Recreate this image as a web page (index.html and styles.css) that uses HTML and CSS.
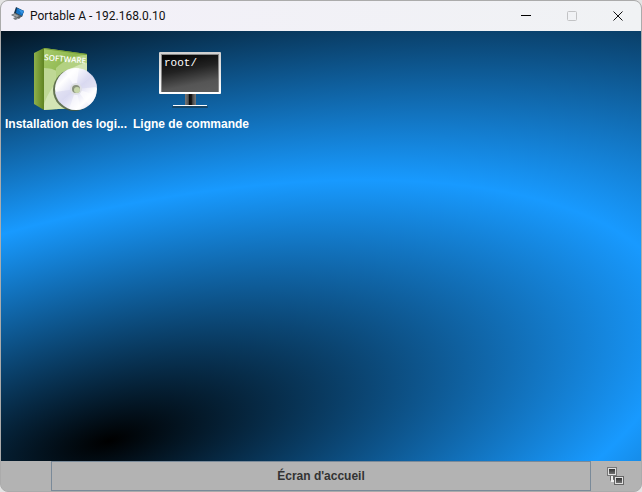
FILE: index.html
```html
<!DOCTYPE html>
<html lang="fr">
<head>
<meta charset="utf-8">
<title>Portable A - 192.168.0.10</title>
<link rel="stylesheet" href="styles.css">
</head>
<body>
<div class="window">
  <header class="titlebar">
    <svg class="app-icon" width="16" height="16" viewBox="0 0 16 16" aria-hidden="true">
      <path d="M6 1 L14 5 L12 11 L4 7Z" fill="#16334e"/>
      <path d="M7 2 L14 5 L12 10 L6 7Z" fill="#1673c4"/>
      <path d="M8 3 L14 5 L12 8Z" fill="#3592e2"/>
      <path d="M1 9 L5 7 L12 10 L9 13Z" fill="#5b6064"/>
      <path d="M2 9 L5 8 L9 10 L7 11Z" fill="#a2a7aa"/>
      <path d="M3 12 L6 11 L8 13 L5 14Z" fill="#777b7e"/>
    </svg>
    <h1 class="title">Portable A - 192.168.0.10</h1>
    <div class="controls">
      <button class="control" aria-label="Réduire">
        <svg width="12" height="12" viewBox="0 0 12 12"><path d="M1 5.500H11" stroke="#000"/></svg>
      </button>
      <button class="control" aria-label="Agrandir" disabled>
        <svg width="12" height="12" viewBox="0 0 12 12"><rect x="1.500" y="1.500" width="9" height="9" rx="1" fill="none" stroke="#c2c3c5"/></svg>
      </button>
      <button class="control" aria-label="Fermer">
        <svg width="12" height="12" viewBox="0 0 12 12"><path d="M1.500 1.500L10.500 10.500M10.500 1.500L1.500 10.500" stroke="#111"/></svg>
      </button>
    </div>
  </header>

  <main class="desktop">
    <svg class="wallpaper" viewBox="0 0 640 430" preserveAspectRatio="none" aria-hidden="true">
      <defs>
        <radialGradient id="glow" gradientUnits="userSpaceOnUse" cx="0" cy="0" r="2" gradientTransform="matrix(508 0 -256 261 108 410)">
          <stop offset="0" stop-color="#000"/>
          <stop offset="0.500" stop-color="#189aff"/>
          <stop offset="1" stop-color="#000"/>
        </radialGradient>
      </defs>
      <rect width="640" height="430" fill="url(#glow)"/>
    </svg>

    <div class="shortcuts">
      <button class="shortcut">
        <svg width="64" height="64" viewBox="0 0 64 64" aria-hidden="true">
          <defs>
            <linearGradient id="side" x1="0" x2="1" y1="0" y2="0">
              <stop offset="0" stop-color="#8fb04c"/>
              <stop offset="0.400" stop-color="#7c9f3a"/>
              <stop offset="1" stop-color="#5f8320"/>
            </linearGradient>
            <linearGradient id="front" x1="0" x2="1" y1="0" y2="1">
              <stop offset="0" stop-color="#a9cb6c"/>
              <stop offset="0.400" stop-color="#8fb850"/>
              <stop offset="1" stop-color="#a9cb70"/>
            </linearGradient>
            <linearGradient id="disc" x1="0" x2="1" y1="0" y2="1">
              <stop offset="0" stop-color="#d4d4ee"/>
              <stop offset="0.250" stop-color="#ffffff"/>
              <stop offset="0.500" stop-color="#dcdcf2"/>
              <stop offset="0.750" stop-color="#ffffff"/>
              <stop offset="1" stop-color="#d0d0ea"/>
            </linearGradient>
            <clipPath id="face"><path d="M10 1 L53 7 V60 L10 63Z"/></clipPath>
          </defs>
          <path d="M0 6 L10 1 V63 L0 57Z" fill="url(#side)"/>
          <path d="M10 1 L53 7 V60 L10 63Z" fill="url(#front)"/>
          <g clip-path="url(#face)">
            <path d="M10 21 C18 21 24 24 27 27 C20 38 12 52 10 63Z" fill="#bfd895"/>
            <path d="M22 21 C30 13 42 8 54 8 V64 H22Z" fill="#b3d182"/>
            <path d="M54 16 C34 18 18 36 10 57 V64 H54Z" fill="#d3e5b5"/>
          </g>
          <path d="M10 1 L53 7 V8 L10 2Z" fill="#789f35"/>
          <text class="box-text" x="10" y="13" transform="rotate(5 10 13)">SOFTWARE</text>
          <circle cx="40" cy="43" r="21" fill="#49573c" opacity="0.800"/>
          <circle cx="42" cy="42" r="21" fill="url(#disc)"/>
          <path d="M42 42 L31 24 A21 21 0 0 1 45 21Z" fill="#fff" opacity="0.600"/>
          <path d="M42 42 L58 28 A21 21 0 0 1 63 40Z" fill="#d5d5ef" opacity="0.600"/>
          <path d="M42 42 L62 48 A21 21 0 0 1 55 58Z" fill="#fff" opacity="0.600"/>
          <path d="M42 42 L26 56 A21 21 0 0 1 21 45Z" fill="#d5d5ef" opacity="0.600"/>
          <path d="M42 42 L47 62 A21 21 0 0 1 35 62Z" fill="#fff" opacity="0.500"/>
          <circle cx="42" cy="42" r="6" fill="#dfe0e6"/>
          <circle cx="42" cy="42" r="4" fill="#8a937c"/>
          <circle cx="43" cy="43" r="3" fill="#c8d7aa"/>
        </svg>
        <span class="label">Installation des logi...</span>
      </button>

      <button class="shortcut">
        <svg width="64" height="64" viewBox="0 0 64 64" aria-hidden="true">
          <defs>
            <linearGradient id="screen" x1="0.300" x2="0.600" y1="0" y2="1">
              <stop offset="0" stop-color="#050505"/>
              <stop offset="0.400" stop-color="#222"/>
              <stop offset="0.800" stop-color="#555"/>
              <stop offset="1" stop-color="#5b5b5b"/>
            </linearGradient>
            <linearGradient id="bezel" x1="0" x2="0" y1="0" y2="1">
              <stop offset="0" stop-color="#d0d0d0"/>
              <stop offset="1" stop-color="#fff"/>
            </linearGradient>
            <linearGradient id="stand" x1="0" x2="1" y1="0" y2="0">
              <stop offset="0" stop-color="#777"/>
              <stop offset="0.300" stop-color="#555"/>
              <stop offset="0.400" stop-color="#0a0a0a"/>
              <stop offset="0.600" stop-color="#1a1a1a"/>
              <stop offset="0.700" stop-color="#4a4a4a"/>
              <stop offset="1" stop-color="#777"/>
            </linearGradient>
          </defs>
          <rect x="26" y="46" width="11" height="13" fill="url(#stand)"/>
          <rect x="13" y="59" width="36" height="2" rx="1" fill="#174565"/>
          <rect x="14" y="58" width="34" height="1" fill="#fff"/>
          <rect x="0" y="5" width="62" height="42" rx="1" fill="url(#bezel)"/>
          <rect x="2" y="7" width="58" height="38" fill="#888"/>
          <rect x="3" y="8" width="56" height="37" fill="url(#screen)"/>
          <text class="prompt" x="5" y="19">root/</text>
        </svg>
        <span class="label">Ligne de commande</span>
      </button>
    </div>
  </main>

  <footer class="taskbar">
    <button class="home">Écran d'accueil</button>
    <button class="network" aria-label="Réseau">
      <svg width="20" height="20" viewBox="0 0 20 20" aria-hidden="true">
        <defs>
          <linearGradient id="node" x1="0" x2="0" y1="0" y2="1">
            <stop offset="0" stop-color="#333"/>
            <stop offset="1" stop-color="#707070"/>
          </linearGradient>
        </defs>
        <path d="M6 9V15H10" fill="none" stroke="#eee" stroke-width="2"/>
        <path d="M4.500 9V14.500M7.500 9V13.500H9" fill="none" stroke="#666"/>
        <rect x="1.500" y="1.500" width="9" height="8" fill="#e0e0e0" stroke="#777"/>
        <rect x="3" y="3" width="6" height="5" fill="url(#node)"/>
        <rect x="8.500" y="10.500" width="9" height="8" fill="#e0e0e0" stroke="#666"/>
        <rect x="10" y="12" width="6" height="5" fill="url(#node)"/>
      </svg>
    </button>
  </footer>
</div>
</body>
</html>
```
FILE: styles.css
```css
* {
  box-sizing: border-box;
}

body {
  margin: 0;
  background: #e4e4e4;
  font-family: "Liberation Sans", Arial, sans-serif;
}

button {
  margin: 0;
  padding: 0;
  border: 0;
  background: none;
  font: inherit;
  color: inherit;
}

svg {
  display: block;
}

.window {
  display: flex;
  flex-direction: column;
  height: 100vh;
  overflow: hidden;
  border: 1px solid #ababab;
  border-radius: 8px;
  background: #b3b3b3;
}

.titlebar {
  display: flex;
  align-items: center;
  flex: none;
  height: 30px;
  padding-left: 9px;
  gap: 4px;
  background: linear-gradient(90deg, #f3f0f9, #f0f2f4);
}

.app-icon {
  flex: none;
  margin-bottom: 4px;
}

.title {
  flex: 1;
  margin: 0;
  font-family: Roboto, "Open Sans", sans-serif;
  font-size: 12px;
  font-weight: 400;
  line-height: 16px;
  color: #111;
}

.controls {
  display: flex;
  height: 100%;
}

.control {
  display: grid;
  place-items: center;
  width: 46px;
}

.desktop {
  position: relative;
  flex: 1;
  min-height: 0;
}

.wallpaper {
  position: absolute;
  inset: 0;
  width: 100%;
  height: 100%;
}

.shortcuts {
  position: relative;
  display: flex;
  gap: 5px;
  padding: 16px 5px;
}

.shortcut {
  display: flex;
  flex-direction: column;
  align-items: center;
  gap: 6px;
  width: 120px;
}

.label {
  font-size: 12px;
  font-weight: 700;
  line-height: 14px;
  white-space: nowrap;
  color: #fff;
}

.box-text {
  font-family: "Open Sans", sans-serif;
  font-size: 8px;
  font-weight: 600;
  fill: #fff;
}

.prompt {
  font-family: "Liberation Mono", monospace;
  font-size: 11px;
  fill: #fff;
}

.taskbar {
  display: flex;
  flex: none;
  height: 30px;
  padding-left: 50px;
  background: #b3b3b3;
}

.home {
  flex: 1;
  border: 1px solid #7a8a99;
  font-size: 12px;
  font-weight: 700;
  color: #333;
}

.network {
  display: grid;
  place-items: center;
  width: 50px;
}
```
